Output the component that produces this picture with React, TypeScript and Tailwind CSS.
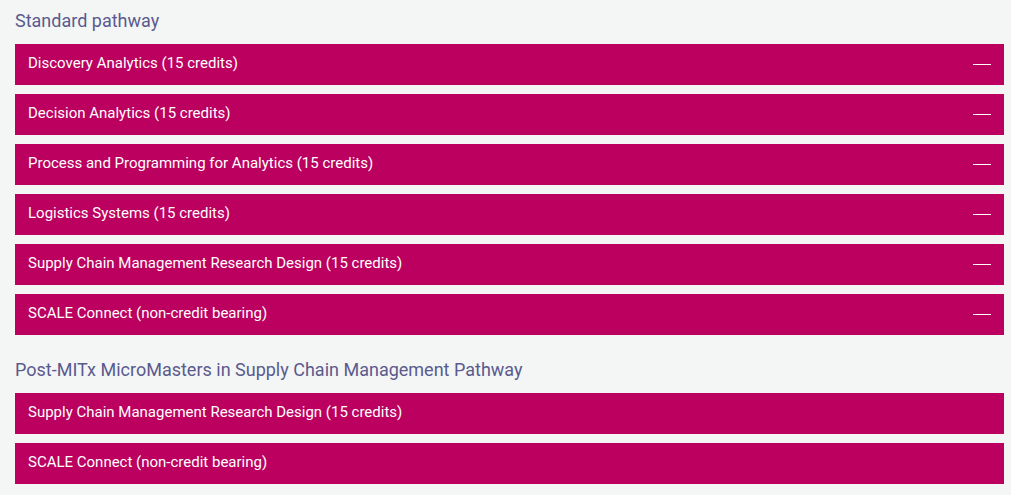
import React from "react";

const standard = [
  "Discovery Analytics (15 credits)",
  "Decision Analytics (15 credits)",
  "Process and Programming for Analytics (15 credits)",
  "Logistics Systems (15 credits)",
  "Supply Chain Management Research Design (15 credits)",
  "SCALE Connect (non-credit bearing)",
];

const post = [
  "Supply Chain Management Research Design (15 credits)",
  "SCALE Connect (non-credit bearing)",
];

function Bar({ label, dash }: { label: string; dash: boolean }) {
  return (
    <div className="flex h-[41px] items-center justify-between bg-[#bb0060] pb-[2px] pl-[13px] pr-[13px] text-[15px] text-white">
      <span>{label}</span>
      {dash && <span className="mt-[2px] block h-px w-[18px] bg-white" />}
    </div>
  );
}

export default function App() {
  return (
    <div
      className="min-h-[495px] w-full bg-[#f4f6f5] pl-[15px] pr-[7px] pt-[9px]"
      style={{ fontFamily: "Roboto, 'Liberation Sans', sans-serif" }}
    >
      <h2 className="mb-[11px] text-[18px] leading-[24px] text-[#5a5a8e]">Standard pathway</h2>
      <div className="flex flex-col gap-[9px]">
        {standard.map((s) => (
          <Bar key={s} label={s} dash />
        ))}
      </div>
      <h2 className="mb-[11px] mt-[23px] text-[18px] leading-[24px] text-[#5a5a8e]">
        Post-MITx MicroMasters in Supply Chain Management Pathway
      </h2>
      <div className="flex flex-col gap-[9px]">
        {post.map((s) => (
          <Bar key={s} label={s} dash={false} />
        ))}
      </div>
    </div>
  );
}
